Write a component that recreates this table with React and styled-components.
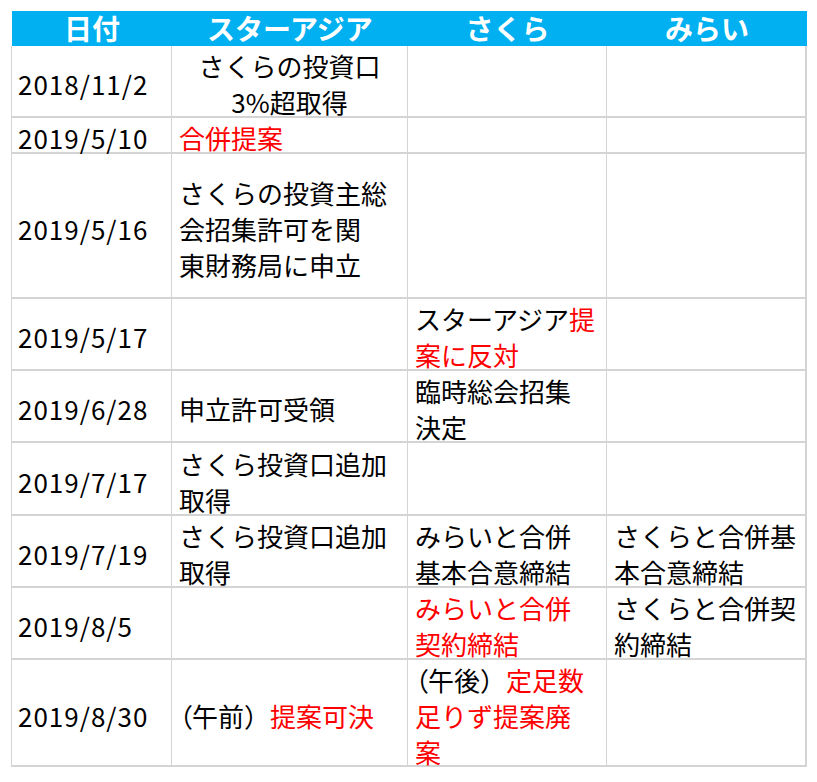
import React from 'react';
import styled, { createGlobalStyle } from 'styled-components';

const GlobalStyle = createGlobalStyle`
  html, body {
    margin: 0;
    padding: 0;
    background: #fff;
  }
  body {
    font-family: "Noto Sans CJK JP", "Noto Sans", sans-serif;
    color: #000;
  }
`;

const COLS = '160px 236px 199px 200px';

const Sheet = styled.div`
  padding: 11px 0 0 11px;
  width: 796px;
`;

const HeadRow = styled.div`
  display: grid;
  grid-template-columns: ${COLS};
  height: 35px;
  background: #00b0f0;
  margin-left: 1px;
`;

const HeadCell = styled.div`
  display: flex;
  align-items: center;
  justify-content: center;
  color: #fff;
  font-weight: bold;
  font-size: 28px;
  line-height: 35px;
`;

const Row = styled.div`
  display: grid;
  grid-template-columns: ${COLS};
  height: ${p => p.$h}px;
  border-left: 1px solid #d4d4d4;
  border-bottom: 2px solid #d4d4d4;
  box-sizing: border-box;
`;

const Cell = styled.div`
  display: flex;
  flex-direction: column;
  justify-content: center;
  align-items: ${p => (p.$center ? 'center' : 'flex-start')};
  padding: 6px 7px 0;
  border-right: 1px solid #d4d4d4;
  font-size: 26px;
  line-height: 36px;
  white-space: nowrap;
  min-height: 0;

  &:last-child {
    border-right-width: 2px;
  }
`;

const DateCell = styled(Cell)`
  padding-left: 6px;
  letter-spacing: 1px;
`;

const Line = styled.span`
  display: block;
`;

const Red = styled.span`
  color: #ff0000;
`;

// opening bracket drawn at its proportional width, like the sheet's font
const Open = styled.span`
  font-feature-settings: "palt";
`;

const rows = [
  {
    h: 72,
    date: '2018/11/2',
    star: [['さくらの投資口'], ['3%超取得']],
    starCenter: true,
  },
  { h: 36, date: '2019/5/10', star: [[<Red key="r">合併提案</Red>]] },
  {
    h: 145,
    date: '2019/5/16',
    star: [['さくらの投資主総'], ['会招集許可を関'], ['東財務局に申立']],
  },
  {
    h: 72,
    date: '2019/5/17',
    sakura: [['スターアジア', <Red key="r">提</Red>], [<Red key="r">案に反対</Red>]],
  },
  {
    h: 72,
    date: '2019/6/28',
    star: [['申立許可受領']],
    sakura: [['臨時総会招集'], ['決定']],
  },
  { h: 73, date: '2019/7/17', star: [['さくら投資口追加'], ['取得']] },
  {
    h: 72,
    date: '2019/7/19',
    star: [['さくら投資口追加'], ['取得']],
    sakura: [['みらいと合併'], ['基本合意締結']],
    mirai: [['さくらと合併基'], ['本合意締結']],
  },
  {
    h: 72,
    date: '2019/8/5',
    sakura: [[<Red key="r">みらいと合併</Red>], [<Red key="r">契約締結</Red>]],
    mirai: [['さくらと合併契'], ['約締結']],
  },
  {
    h: 107,
    date: '2019/8/30',
    star: [[<Open key="o">（</Open>, '午前）', <Red key="r">提案可決</Red>]],
    sakura: [
      [<Open key="o">（</Open>, '午後）', <Red key="r">定足数</Red>],
      [<Red key="r">足りず提案廃</Red>],
      [<Red key="r">案</Red>],
    ],
  },
];

function Lines({ lines }) {
  if (!lines) return null;
  return lines.map((parts, i) => <Line key={i}>{parts}</Line>);
}

export default function App() {
  return (
    <>
      <GlobalStyle />
      <Sheet>
        <HeadRow>
          <HeadCell>日付</HeadCell>
          <HeadCell>スターアジア</HeadCell>
          <HeadCell>さくら</HeadCell>
          <HeadCell>みらい</HeadCell>
        </HeadRow>
        {rows.map(r => (
          <Row key={r.date} $h={r.h}>
            <DateCell>{r.date}</DateCell>
            <Cell $center={r.starCenter}>
              <Lines lines={r.star} />
            </Cell>
            <Cell>
              <Lines lines={r.sakura} />
            </Cell>
            <Cell>
              <Lines lines={r.mirai} />
            </Cell>
          </Row>
        ))}
      </Sheet>
    </>
  );
}
